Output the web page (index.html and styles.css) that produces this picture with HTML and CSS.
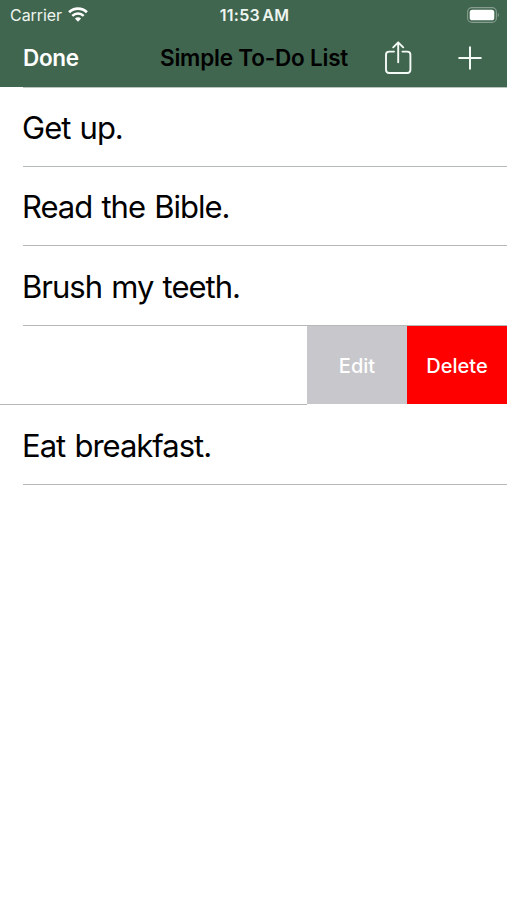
FILE: index.html
```html
<!DOCTYPE html>
<html lang="en">
<head>
<meta charset="UTF-8">
<meta name="viewport" content="width=device-width, initial-scale=1.0">
<title>Simple To-Do List</title>
<link rel="stylesheet" href="styles.css">
</head>
<body>
    <header class="header">
        <div class="status-bar">
            <div class="carrier">
                <span>Carrier</span>
                <svg class="wifi" width="20" height="15" viewBox="0 0 20 15">
                    <path d="M1.1 5.3 A12.8 12.8 0 0 1 18.9 5.3" fill="none" stroke="#fff" stroke-width="2.7"/>
                    <path d="M4.3 8.8 A8.3 8.3 0 0 1 15.7 8.8" fill="none" stroke="#fff" stroke-width="2.5"/>
                    <path d="M10 14.8 L6.9 11.6 A4.5 4.5 0 0 1 13.1 11.6 Z" fill="#fff"/>
                </svg>
            </div>
            <span class="time">11:53 AM</span>
            <svg class="battery" width="33" height="16" viewBox="0 0 33 16">
                <rect x="0.6" y="0.6" width="28.8" height="14.8" rx="4.4" fill="none" stroke="#869d8f" stroke-width="1.1"/>
                <rect x="2.7" y="2.7" width="24.6" height="10.6" rx="2.6" fill="#fff"/>
                <path d="M30.8 5.8 Q33.2 8 30.8 10.2 Z" fill="#869d8f"/>
            </svg>
        </div>
        <nav class="nav-bar">
            <span class="done">Done</span>
            <h1 class="title">Simple To-Do List</h1>
            <div class="nav-icons">
                <svg width="28" height="34" viewBox="0 0 28 34" fill="none" stroke="#f4faf6" stroke-width="1.9" stroke-linecap="round" stroke-linejoin="round">
                    <path d="M10 10.6 H5.2 Q2 10.6 2 13.8 V28.8 Q2 32 5.2 32 H23.2 Q26.4 32 26.4 28.8 V13.8 Q26.4 10.6 23.2 10.6 H18.4"/>
                    <path d="M14.2 21.2 V1.5 M9.2 6.3 L14.2 1.3 L19.2 6.3"/>
                </svg>
                <svg width="26" height="26" viewBox="0 0 26 26" fill="none" stroke="#f4faf6" stroke-width="2" stroke-linecap="round">
                    <path d="M13 2.2 V23.8 M2.2 13 H23.8"/>
                </svg>
            </div>
        </nav>
    </header>
    <ul class="list">
        <li class="item first"><span class="text">Get up.</span></li>
        <li class="item short"><span class="text">Read the Bible.</span></li>
        <li class="item"><span class="text">Brush my teeth.</span></li>
        <li class="item short swiped">
            <div class="swiped-cell"></div>
            <button class="edit">Edit</button>
            <button class="delete">Delete</button>
        </li>
        <li class="item"><span class="text">Eat breakfast.</span></li>
    </ul>
</body>
</html>
```

FILE: styles.css
```css
* {
    box-sizing: border-box;
}
body {
    margin: 0;
    background-color: white;
    font-family: Inter, "Liberation Sans", sans-serif;
    color: black;
}
.header {
    height: 87px;
    background-color: #41664f;
}
.status-bar {
    display: grid;
    grid-template-columns: 1fr auto 1fr;
    align-items: center;
    height: 29px;
    padding: 0 8px 0 10px;
    color: #eef5f0;
}
.carrier {
    display: flex;
    align-items: center;
    gap: 6px;
    font-size: 16px;
    letter-spacing: -0.05px;
}
.time {
    font-size: 16px;
    font-weight: 600;
    letter-spacing: 0.3px;
    word-spacing: -2px;
}
.battery {
    justify-self: end;
    margin-right: -1px;
}
.nav-bar {
    display: grid;
    grid-template-columns: 1fr auto 1fr;
    align-items: center;
    height: 57px;
    padding: 0 24px 0 23px;
}
.done {
    font-size: 22.5px;
    font-weight: 600;
    letter-spacing: -0.3px;
    color: white;
}
.title {
    margin: 0 -1px 0 1px;
    font-size: 22.5px;
    font-weight: 600;
    letter-spacing: -0.2px;
    white-space: nowrap;
}
.nav-icons {
    display: flex;
    align-items: center;
    justify-content: flex-end;
    gap: 45px;
}
.list {
    margin: 0;
    padding: 0;
    list-style: none;
}
.item {
    display: flex;
    align-items: center;
    height: 80px;
    margin-left: 23px;
    border-bottom: 1px solid #b5b9b8;
}
.first {
    border-top: 1px solid #b9c4be;
}
.short {
    height: 79px;
}
.text {
    margin-left: -1px;
    padding-top: 1px;
    font-size: 31px;
    letter-spacing: -1px;
    word-spacing: 1.5px;
    white-space: nowrap;
}
.swiped {
    align-items: stretch;
    margin-left: 0;
    border-bottom: none;
}
.swiped-cell {
    flex: 1;
    border-bottom: 1px solid #b5b9b8;
}
.edit, .delete {
    width: 100px;
    margin-bottom: 1px;
    border: none;
    padding: 1px 0 0;
    font-family: inherit;
    font-size: 20px;
    font-weight: 500;
    color: white;
}
.edit {
    background-color: #c7c7cc;
}
.delete {
    background-color: #ff0000;
}
```
